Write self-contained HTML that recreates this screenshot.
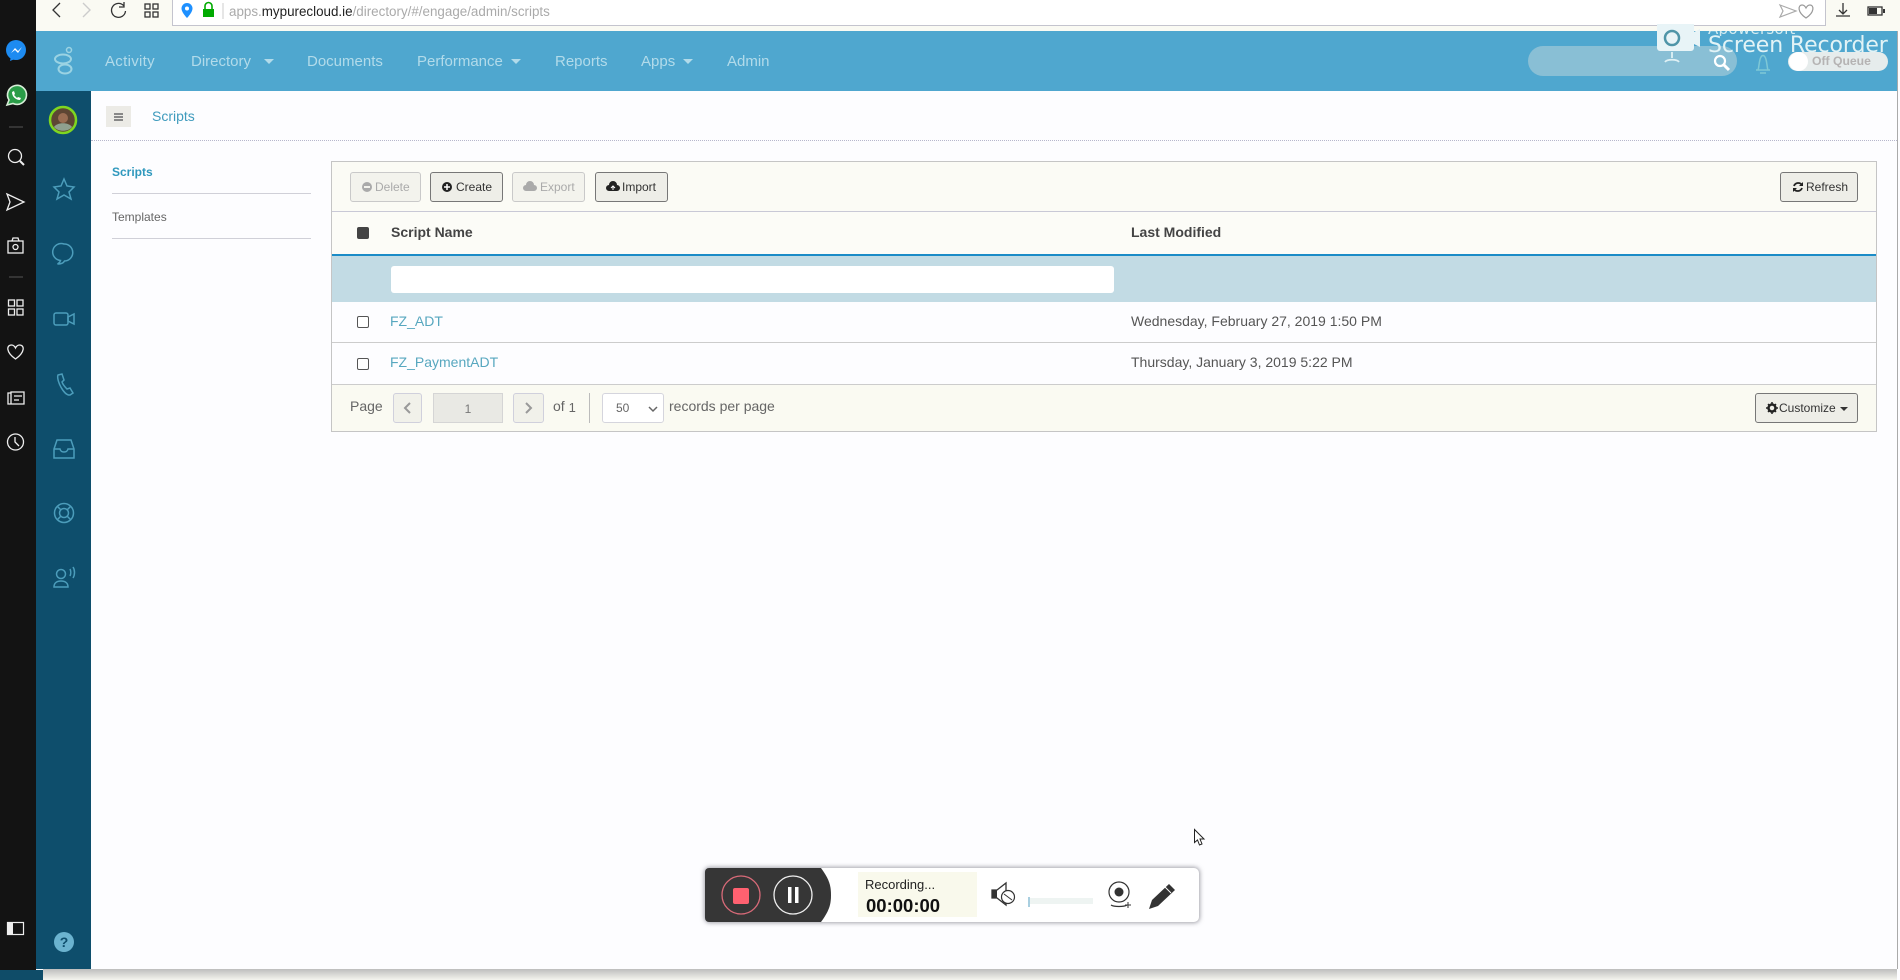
<!DOCTYPE html>
<html><head><meta charset="utf-8"><style>
html,body{margin:0;padding:0;width:1900px;height:980px;overflow:hidden;background:#fdfdff;font-family:"Liberation Sans",sans-serif}
.a{position:absolute}
.t{position:absolute;white-space:nowrap;line-height:16px}
.btn{position:absolute;top:172px;height:28px;border:1px solid #777;border-radius:3px;background:#eeeee8;font-size:12px;color:#333;line-height:28px;box-sizing:content-box;white-space:nowrap}
.btn.d{border-color:#c9c9c9;color:#aaa;background:#f3f3ed}
.btn svg{position:absolute;top:8px}
.btn span{position:absolute;top:0}
.nav{position:absolute;top:53px;font-size:15px;line-height:18px;color:#b2dbea;white-space:nowrap}
.car{position:absolute;top:59px;width:0;height:0;border-left:5px solid transparent;border-right:5px solid transparent;border-top:5px solid #b2dbea}
svg{position:absolute;overflow:visible}
.w{fill:none;stroke:#eee;stroke-width:1.3}
.s{fill:none;stroke:#4c9dbb;stroke-width:1.5}
.c{fill:none;stroke:#333;stroke-width:1.3}
</style></head><body>
<!-- chrome -->
<div class="a" style="left:36px;top:0;width:1864px;height:31px;background:#fafaf3"></div>
<div class="a" style="left:172px;top:-1px;width:1652px;height:25px;background:#fff;border:1px solid #c4c4ce;box-sizing:content-box"></div>
<svg style="left:0;top:0" width="1900" height="31">
<g transform="translate(-1,-2)">
<path class="c" d="M61 5l-7 7 7 7" stroke-width="1.6"/>
<path d="M84 5l7 7-7 7" fill="none" stroke="#ccc" stroke-width="1.4"/>
<path class="c" d="M125 8a7 7 0 1 0 1.500 5M125 4v5h-5"/>
<rect class="c" x="146" y="6" width="5" height="5"/><rect class="c" x="154" y="6" width="5" height="5"/><rect class="c" x="146" y="14" width="5" height="5"/><rect class="c" x="154" y="14" width="5" height="5"/>
</g>
<g transform="translate(0,-1)">
<path d="M187 4a5.500 5.500 0 0 1 5.500 5.500c0 4-5.500 9.500-5.500 9.500s-5.500-5.500-5.500-9.500A5.500 5.500 0 0 1 187 4z" fill="#1e90ff"/><circle cx="187" cy="9.500" r="2" fill="#fff"/>
<rect x="203" y="10" width="11" height="8" fill="#0a0"/><path d="M205 10V7a3.500 3.500 0 0 1 7 0v3" fill="none" stroke="#0a0" stroke-width="1.600"/>
<path d="M223 4v16" stroke="#ccc"/>
<path d="M1780 6l16 6-16 6 3-6z" fill="none" stroke="#aaa" stroke-width="1.200"/>
<path d="M1806 19c-9-6-8-13-4-13 2 0 3 1 4 3 1-2 2-3 4-3 4 0 5 7-4 13z" fill="none" stroke="#999" stroke-width="1.200"/>
<path class="c" d="M1843 4v11M1839 11l4 4 4-4M1836 17h14" stroke-width="1.100"/>
<rect class="c" x="1868" y="8" width="14" height="8" stroke-width="1.200"/><rect x="1869" y="9" width="8" height="6" fill="#333"/><rect x="1883" y="10" width="2" height="4" fill="#333"/>
</g>
</svg>
<div class="t" style="left:229px;top:4px;font-size:13.400px;color:#aaa">apps.<span style="color:#222">mypurecloud.ie</span>/directory/#/engage/admin/scripts</div>
<!-- left black strip -->
<div class="a" style="left:0;top:0;width:36px;height:980px;background:#131313"></div>
<div class="a" style="left:0;top:970px;width:43px;height:10px;background:#0f4c68"></div>
<svg style="left:0;top:0" width="36" height="960">
<circle cx="16" cy="50" r="10" fill="#1d8bf1"/><path d="M11 56l-1 5 5-2z" fill="#1d8bf1"/><path d="M11 53l4-5 3 3 4-4-4 6-3-3z" fill="#fff"/>
<path d="M7 105l2-5a9.500 9.500 0 1 1 4 3.500z" fill="#2a9d48" stroke="#d8eed8" stroke-width="1.600"/><path d="M12 92c0 5 4 8 8 8l1-2-3-1-1 1c-1-1-2-2-3-3l1-1-1-3z" fill="#fff"/>
<path d="M9 127h14M9 277h14" stroke="#555"/>
<circle class="w" cx="15" cy="156" r="6.500"/><path d="M20 161l4 4" stroke="#eee" stroke-width="2"/>
<path class="w" d="M7 194l17 8-17 8 3-8z"/>
<rect class="w" x="8" y="241" width="15" height="12"/><path class="w" d="M12 241l1-3h5l1 3"/><circle class="w" cx="15.500" cy="247" r="2.500"/>
<rect class="w" x="8.500" y="300" width="6" height="6"/><rect class="w" x="17" y="300" width="6" height="6"/><rect class="w" x="8.500" y="309" width="6" height="6"/><rect class="w" x="17" y="309" width="6" height="6"/>
<path class="w" d="M15.500 359c-10-7-9-14-4-14 2 0 3 1 4 3 1-2 2-3 4-3 5 0 6 7-4 14z"/>
<path class="w" d="M8 393h3v-1h13v12H8zM11 393v11M14 396h8M14 400h5"/>
<circle class="w" cx="15.500" cy="442" r="8"/><path class="w" d="M15 437v5l4 4"/>
<rect x="7.500" y="922.500" width="16" height="12" fill="none" stroke="#eee" stroke-width="1.200"/><rect x="7" y="922" width="6" height="13" fill="#eee"/>
</svg>
<!-- header -->
<div class="a" style="left:36px;top:31px;width:1861px;height:60px;background:#4fa7cf"></div>
<svg style="left:36px;top:31px" width="60" height="60">
<ellipse cx="27" cy="28" rx="8" ry="4.500" fill="none" stroke="#9bd3e3" stroke-width="2"/>
<ellipse cx="29" cy="38" rx="6.500" ry="4.500" fill="none" stroke="#9bd3e3" stroke-width="2"/>
<circle cx="33" cy="19" r="2.500" fill="none" stroke="#9bd3e3" stroke-width="1.500"/>
</svg>
<div class="nav" style="left:105px;letter-spacing:.3px">Activity</div>
<div class="nav" style="left:191px">Directory</div><div class="car" style="left:264px"></div>
<div class="nav" style="left:307px">Documents</div>
<div class="nav" style="left:417px">Performance</div><div class="car" style="left:511px"></div>
<div class="nav" style="left:555px">Reports</div>
<div class="nav" style="left:641px">Apps</div><div class="car" style="left:683px"></div>
<div class="nav" style="left:727px">Admin</div>
<div class="a" style="left:1528px;top:46px;width:209px;height:30px;border-radius:15px;background:#89bfd5"></div>
<svg style="left:1700px;top:24px" width="200" height="60">
<circle cx="20" cy="37" r="5" fill="none" stroke="#fff" stroke-width="2.200"/><path d="M24 41l5 5" stroke="#fff" stroke-width="3"/>
<path d="M58 46c1-2 1-10 3-13 1-2 3-2 4 0 2 3 2 11 3 13zM56 46h14M60 49h6" fill="none" stroke="#7ec8d6" stroke-width="1.500"/>
</svg>
<div class="a" style="left:1788px;top:52px;width:100px;height:19px;border-radius:10px;background:#e6ecec"></div>
<div class="a" style="left:1789px;top:52px;width:19px;height:19px;border-radius:50%;background:#fff"></div>
<div class="t" style="left:1812px;top:53px;font-size:12.200px;font-weight:bold;color:#b5b3b3">Off Queue</div>
<div class="a" style="left:1708px;top:31px;width:120px;height:5px;overflow:hidden"><div style="position:absolute;left:0;top:-9px;white-space:nowrap;font:15px/14px 'DejaVu Sans',sans-serif;color:#d3ecf2;letter-spacing:.3px">Apowersoft</div></div>
<div class="t" style="left:1708px;top:32px;font:22px/28px 'DejaVu Sans',sans-serif;color:#e2f3f6;letter-spacing:-.1px">Screen Recorder</div>
<svg style="left:1657px;top:24px" width="50" height="40">
<path d="M0 0h37v8l6-3v18l-6-3v4a3 3 0 0 1-3 3H3a3 3 0 0 1-3-3z" fill="#e8f4f7"/>
<circle cx="15" cy="14" r="7" fill="none" stroke="#4f95a8" stroke-width="2.500"/>
<path d="M15 28v6M8 38c2-3 12-3 14 0" fill="none" stroke="#dff0f4" stroke-width="1.800"/>
</svg>
<div class="a" style="left:1897px;top:31px;width:1px;height:938px;background:#aaa"></div>
<!-- sidebar -->
<div class="a" style="left:36px;top:91px;width:55px;height:878px;background:#0e4e6c"></div>
<svg style="left:36px;top:91px" width="55" height="878">
<circle cx="27" cy="29" r="13" fill="#5e4633" stroke="#7fd620" stroke-width="2.500"/><circle cx="27" cy="27" r="5" fill="#9a6d52"/><path d="M18 36c3-5 15-5 18 0-4 5-14 5-18 0z" fill="#8fa08f"/>
<path class="s" d="M28 88l3 7 7 1-5 5 2 7-7-4-7 4 2-7-5-5 7-1z"/>
<path class="s" d="M28 153a8.500 8.500 0 1 0-3.500 16.500c-.5 1.500-2 3-3 3.500 3 0 6-1 7-3a8.500 8.500 0 0 0-.5-17z"/>
<rect class="s" x="18" y="222" width="14" height="12" rx="2"/><path class="s" d="M32 226l6-3v10l-6-3z"/>
<path class="s" d="M22 284l4-1 2 6-2 2c1 3 3 5 5 7l3-1 3 5-3 2c-6 1-14-15-12-20z"/>
<path class="s" d="M18 358v9h20v-9l-3-9H21zM18 358h6c1 4 7 4 8 0h6"/>
<circle class="s" cx="28" cy="422" r="9.500"/><circle class="s" cx="28" cy="422" r="4.500"/><path class="s" d="M21 415l4 4M35 415l-4 4M21 429l4-4M35 429l-4-4"/>
<circle class="s" cx="25" cy="483" r="4.500"/><path class="s" d="M18 496c0-4 3-6 7-6s7 2 7 6zM34 478c1 2 1 5 0 7M37 476c2 3 2 8 0 11"/>
<circle cx="28" cy="851" r="10" fill="#6bb3cf"/>
<text x="28" y="856" font-family="Liberation Sans" font-size="14" font-weight="bold" text-anchor="middle" fill="#0e4e6c">?</text>
</svg>
<!-- subheader -->
<div class="a" style="left:91px;top:140px;width:1806px;height:0;border-top:1px dotted #b7b7cc"></div>
<div class="a" style="left:106px;top:106px;width:25px;height:21px;background:#ecebe6"></div>
<div class="a" style="left:114px;top:113px;width:9px;height:2px;background:#888;box-shadow:0 3px 0 #888,0 6px 0 #888"></div>
<div class="t" style="left:152px;top:108px;font-size:14px;color:#3f9bbd">Scripts</div>
<!-- left list -->
<div class="t" style="left:112px;top:164px;font-size:12px;font-weight:bold;color:#2f98bd">Scripts</div>
<div class="a" style="left:112px;top:193px;width:199px;height:1px;background:#d0d0d8"></div>
<div class="t" style="left:112px;top:209px;font-size:12px;color:#666">Templates</div>
<div class="a" style="left:112px;top:238px;width:199px;height:1px;background:#d0d0d8"></div>
<!-- panel -->
<div class="a" style="left:331px;top:161px;width:1546px;height:271px;border:1px solid #c5c5c5;box-sizing:border-box;background:#fdfdff"></div>
<div class="a" style="left:332px;top:162px;width:1544px;height:50px;background:#fbfbf5;border-bottom:1px solid #c9c9d6;box-sizing:border-box"></div>
<div class="a" style="left:332px;top:212px;width:1544px;height:42px;background:#fcfcf7"></div>
<div class="a" style="left:332px;top:254px;width:1544px;height:2px;background:#1b8cc7"></div>
<div class="a" style="left:332px;top:256px;width:1544px;height:46px;background:#c2dbe4"></div>
<div class="a" style="left:391px;top:266px;width:723px;height:27px;background:#fff;border-radius:3px"></div>
<div class="a" style="left:332px;top:342px;width:1544px;height:1px;background:#ccc"></div>
<div class="a" style="left:332px;top:384px;width:1544px;height:47px;background:#fafaf2;border-top:1px solid #ccc;box-sizing:border-box"></div>
<!-- toolbar buttons -->
<div class="btn d" style="left:350px;width:69px"><svg style="left:10px" width="12" height="12"><circle cx="6" cy="6" r="5" fill="#aaa"/><rect x="3" y="5" width="6" height="2" fill="#f3f3ed"/></svg><span style="left:24px">Delete</span></div>
<div class="btn" style="left:430px;width:71px"><svg style="left:10px" width="12" height="12"><circle cx="6" cy="6" r="5" fill="#222"/><path d="M3 6h6M6 3v6" stroke="#fff" stroke-width="1.500"/></svg><span style="left:25px">Create</span></div>
<div class="btn d" style="left:512px;width:71px"><svg style="left:10px" width="14" height="12"><path d="M3 10a3 3 0 0 1 0-6 4 4 0 0 1 8 0 3 3 0 0 1 0 6z" fill="#aaa"/></svg><span style="left:27px">Export</span></div>
<div class="btn" style="left:595px;width:71px"><svg style="left:10px" width="14" height="12"><path d="M3 10a3 3 0 0 1 0-6 4 4 0 0 1 8 0 3 3 0 0 1 0 6z" fill="#222"/><path d="M7 9V5M5 7l2-2 2 2" stroke="#fff" fill="none"/></svg><span style="left:26px">Import</span></div>
<div class="btn" style="left:1780px;width:76px"><svg style="left:11px" width="12" height="12"><path d="M10 4a4.500 4.500 0 0 0-8 1M2 8a4.500 4.500 0 0 0 8-1" fill="none" stroke="#222" stroke-width="1.800"/><path d="M11 1v4H7zM1 11V7h4z" fill="#222"/></svg><span style="left:25px">Refresh</span></div>
<!-- table -->
<div class="a" style="left:357px;top:227px;width:12px;height:12px;border-radius:2px;background:#444"></div>
<div class="t" style="left:391px;top:224px;font-size:14px;font-weight:bold;color:#444">Script Name</div>
<div class="t" style="left:1131px;top:224px;font-size:14px;font-weight:bold;color:#444">Last Modified</div>
<div class="a" style="left:357px;top:316px;width:10px;height:10px;border:1px solid #555;border-radius:2px;background:#fff"></div>
<div class="a" style="left:357px;top:358px;width:10px;height:10px;border:1px solid #555;border-radius:2px;background:#fff"></div>
<div class="t" style="left:390px;top:313px;font-size:14px;color:#57a7bf">FZ_ADT</div>
<div class="t" style="left:390px;top:354px;font-size:14px;color:#57a7bf">FZ_PaymentADT</div>
<div class="t" style="left:1131px;top:313px;font-size:14px;color:#555">Wednesday, February 27, 2019 1:50 PM</div>
<div class="t" style="left:1131px;top:354px;font-size:14px;color:#555">Thursday, January 3, 2019 5:22 PM</div>
<!-- footer -->
<div class="t" style="left:350px;top:398px;font-size:14px;color:#666">Page</div>
<div class="a" style="left:393px;top:393px;width:29px;height:30px;border:1px solid #d0d0dc;border-radius:3px;box-sizing:border-box;background:#f1f1ea"></div>
<svg style="left:393px;top:393px" width="29" height="30"><path d="M17 10l-5 5 5 5" fill="none" stroke="#999" stroke-width="2"/></svg>
<div class="a" style="left:433px;top:393px;width:70px;height:30px;border:1px solid #d5d5d5;box-sizing:border-box;background:#e9e9e4;font-size:12px;line-height:30px;text-align:center;color:#777">1</div>
<div class="a" style="left:513px;top:393px;width:31px;height:30px;border:1px solid #d0d0dc;border-radius:3px;box-sizing:border-box;background:#f1f1ea"></div>
<svg style="left:513px;top:393px" width="31" height="30"><path d="M13 10l5 5-5 5" fill="none" stroke="#999" stroke-width="2"/></svg>
<div class="t" style="left:553px;top:398px;font-size:14px;color:#666">of <span style="font-size:13px;position:relative;top:1px">1</span></div>
<div class="a" style="left:589px;top:393px;width:1px;height:30px;background:#bbb"></div>
<div class="a" style="left:602px;top:393px;width:62px;height:30px;border:1px solid #d5d5dd;border-radius:3px;box-sizing:border-box;background:#fff;font-size:12px;line-height:29px;color:#666;padding-left:13px">50</div>
<svg style="left:602px;top:393px" width="62" height="30"><path d="M47 14l4 4 4-4" fill="none" stroke="#666" stroke-width="1.500"/></svg>
<div class="t" style="left:669px;top:398px;font-size:14px;color:#666">records per page</div>
<div class="btn" style="left:1755px;top:393px;width:101px"><svg style="left:10px" width="12" height="12"><circle cx="6" cy="6" r="3.500" fill="none" stroke="#222" stroke-width="2.500"/><path d="M6 0v2M6 10v2M0 6h2M10 6h2M2 2l1.500 1.500M10 2L8.500 3.500M2 10l1.500-1.500M10 10L8.500 8.500" stroke="#222" stroke-width="1.500"/></svg><span style="left:23px">Customize</span><span style="left:84px;top:13px;width:0;height:0;border-left:4px solid transparent;border-right:4px solid transparent;border-top:4px solid #333"></span></div>
<!-- bottom strip -->
<div class="a" style="left:43px;top:969px;width:1854px;height:11px;background:linear-gradient(#bdbdbd,#f4f4ee)"></div>
<!-- recorder -->
<div class="a" style="left:705px;top:868px;width:494px;height:54px;background:#fff;border-radius:5px;box-shadow:0 0 4px 1px rgba(90,90,100,.55)"></div>
<svg style="left:705px;top:868px" width="494" height="54">
<path d="M4 0h112c8 11 10 17 10 27s-2 16-10 27H4a4 4 0 0 1-4-4V4a4 4 0 0 1 4-4z" fill="#363636"/>
<circle cx="36" cy="27" r="19" fill="none" stroke="#d86a78" stroke-width="1.300"/>
<rect x="28" y="20" width="16" height="16" rx="2" fill="#ff6170"/>
<circle cx="88" cy="27" r="19" fill="none" stroke="#eee" stroke-width="1.300"/>
<rect x="83" y="19" width="3.500" height="16" fill="#fff"/><rect x="90" y="19" width="3.500" height="16" fill="#fff"/>
<rect x="153" y="4" width="119" height="45" fill="#f9f9ec"/>
<path d="M287 22h5l9-7v22l-9-7h-5z" fill="#fff" stroke="#333" stroke-width="1.300"/><path d="M287 22h5v8h-5z" fill="#333"/>
<circle cx="303" cy="29" r="6.500" fill="#fff" stroke="#333" stroke-width="1.200"/><path d="M299 26l8 6" stroke="#333"/>
<rect x="323" y="30" width="65" height="6" fill="#eef4f2"/><rect x="323" y="29" width="2" height="10" fill="#a9cfe0"/>
<circle cx="414" cy="24" r="10" fill="none" stroke="#333" stroke-width="1.200"/><circle cx="414" cy="24" r="4.500" fill="#333"/>
<path d="M406 37c3 2 13 2 16 0" fill="none" stroke="#333" stroke-width="1.200"/><path d="M420 37h6M423 34v6" stroke="#333"/>
<path d="M444 41l3-9 17-16 6 6-17 16z" fill="#333"/><path d="M460 19l6 6" stroke="#fff"/>
</svg>
<div class="t" style="left:865px;top:877px;font:13px/16px 'Liberation Sans',sans-serif;color:#222">Recording...</div>
<div class="t" style="left:866px;top:895px;font:bold 18.500px/22px 'Liberation Sans',sans-serif;color:#111">00:00:00</div>
<svg style="left:1194px;top:829px" width="12" height="18"><path d="M0.500 0.500v13l3-2.500 2 5 2.500-1-2-5h4z" fill="#fff" stroke="#222"/></svg>
</body></html>
